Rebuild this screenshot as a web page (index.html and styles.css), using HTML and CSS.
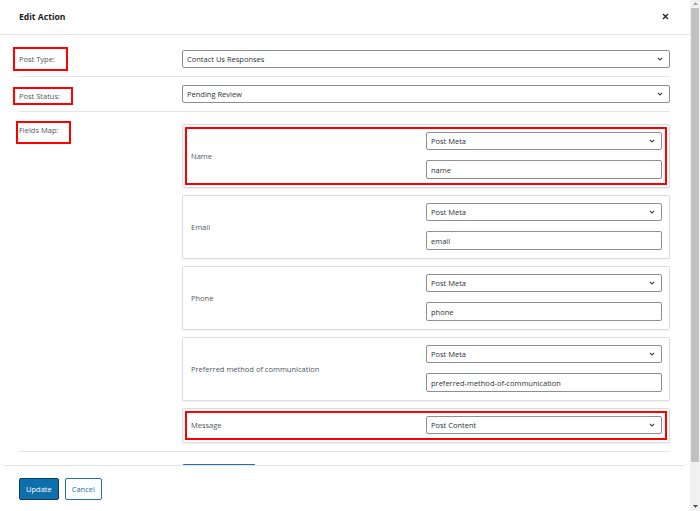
FILE: index.html
```html
<!DOCTYPE html>
<html lang="en">
<head>
<meta charset="utf-8">
<title>Edit Action</title>
<link rel="stylesheet" href="styles.css">
</head>
<body>
<div class="app">
  <div class="modal">
    <header class="head">
      <h1 class="title">Edit Action</h1>
      <span class="close" aria-label="Close">
        <svg width="7" height="7" viewBox="0 0 7 7"><path d="M1 1L6 6M6 1L1 6" stroke="#1d2327" stroke-width="1.3" fill="none"/></svg>
      </span>
    </header>

    <div class="body">
      <div class="row row-center">
        <div class="lab"><span class="mark">Post Type:</span></div>
        <div class="field">
          <div class="select"><span>Contact Us Responses</span><svg class="chev" width="6" height="4" viewBox="0 0 6 4"><path d="M0.8 0.8L3 3L5.2 0.8" stroke="#3c434a" stroke-width="1.1" fill="none"/></svg></div>
        </div>
      </div>

      <div class="row row-center">
        <div class="lab"><span class="mark mark-status">Post Status:</span></div>
        <div class="field">
          <div class="select"><span>Pending Review</span><svg class="chev" width="6" height="4" viewBox="0 0 6 4"><path d="M0.8 0.8L3 3L5.2 0.8" stroke="#3c434a" stroke-width="1.1" fill="none"/></svg></div>
        </div>
      </div>

      <div class="row row-top">
        <div class="lab"><span class="mark mark-map">Fields Map:</span></div>
        <div class="field cards">
          <div class="card marked">
            <div class="card-label">Name</div>
            <div class="card-fields">
              <div class="select"><span>Post Meta</span><svg class="chev" width="6" height="4" viewBox="0 0 6 4"><path d="M0.8 0.8L3 3L5.2 0.8" stroke="#3c434a" stroke-width="1.1" fill="none"/></svg></div>
              <div class="input">name</div>
            </div>
          </div>
          <div class="card">
            <div class="card-label">Email</div>
            <div class="card-fields">
              <div class="select"><span>Post Meta</span><svg class="chev" width="6" height="4" viewBox="0 0 6 4"><path d="M0.8 0.8L3 3L5.2 0.8" stroke="#3c434a" stroke-width="1.1" fill="none"/></svg></div>
              <div class="input">email</div>
            </div>
          </div>
          <div class="card">
            <div class="card-label">Phone</div>
            <div class="card-fields">
              <div class="select"><span>Post Meta</span><svg class="chev" width="6" height="4" viewBox="0 0 6 4"><path d="M0.8 0.8L3 3L5.2 0.8" stroke="#3c434a" stroke-width="1.1" fill="none"/></svg></div>
              <div class="input">phone</div>
            </div>
          </div>
          <div class="card">
            <div class="card-label">Preferred method of communication</div>
            <div class="card-fields">
              <div class="select"><span>Post Meta</span><svg class="chev" width="6" height="4" viewBox="0 0 6 4"><path d="M0.8 0.8L3 3L5.2 0.8" stroke="#3c434a" stroke-width="1.1" fill="none"/></svg></div>
              <div class="input">preferred-method-of-communication</div>
            </div>
          </div>
          <div class="card marked">
            <div class="card-label">Message</div>
            <div class="card-fields">
              <div class="select"><span>Post Content</span><svg class="chev" width="6" height="4" viewBox="0 0 6 4"><path d="M0.8 0.8L3 3L5.2 0.8" stroke="#3c434a" stroke-width="1.1" fill="none"/></svg></div>
            </div>
          </div>
        </div>
      </div>

      <div class="row row-top row-last">
        <div class="lab lab-plain">Default Fields:</div>
        <div class="field">
          <span class="ghost-btn"></span>
        </div>
      </div>
    </div>

    <footer class="foot">
      <button class="btn btn-primary">Update</button>
      <button class="btn btn-secondary">Cancel</button>
    </footer>
  </div>

  <div class="scrollbar">
    <svg class="arrow" width="5" height="3" viewBox="0 0 5 3"><path d="M0 3L2.5 0L5 3Z" fill="#a3a3a3"/></svg>
    <div class="thumb"></div>
    <div class="track"></div>
    <svg class="arrow" width="5" height="3" viewBox="0 0 5 3"><path d="M0 0L5 0L2.5 3Z" fill="#505050"/></svg>
  </div>
</div>
</body>
</html>
```

FILE: styles.css
```css
* { box-sizing: border-box; }

html, body {
  margin: 0;
  padding: 0;
  background: #ffffff;
}

body {
  font-family: "Open Sans", "Noto Sans", sans-serif;
  font-size: 7.5px;
  color: #3c434a;
}

.app {
  display: flex;
  width: 700px;
  height: 511px;
  overflow: hidden;
}

.modal {
  flex: 1;
  display: flex;
  flex-direction: column;
  min-width: 0;
}

/* header */
.head {
  height: 35px;
  flex: none;
  display: flex;
  align-items: center;
  justify-content: space-between;
  padding: 0 21px 1px 19px;
  border-bottom: 1px solid #e2e4e7;
}

.title {
  margin: 0;
  font-size: 8.6px;
  font-weight: 700;
  color: #1d2327;
}

.close {
  display: flex;
  width: 7px;
  height: 7px;
}

/* body */
.body {
  flex: 1;
  min-height: 0;
  overflow: hidden;
  padding: 7px 20px 0 19px;
}

.row {
  display: grid;
  grid-template-columns: 163px 1fr;
  padding: 8px 0;
  border-bottom: 1px solid #e2e4e7;
}

.row-center { align-items: center; }
.row-top { align-items: start; }
.row-last { border-bottom: none; padding-top: 11px; }

.lab {
  color: #50575e;
  line-height: 12px;
}

.lab-plain { padding-top: 1px; }

.mark {
  display: inline-block;
  margin: -3px 0 -3px -6px;
  border: 2px solid #ff0000;
  padding: 4px 11px 4px 4px;
  line-height: 12px;
}

.mark-status {
  margin: 2px 0 -2px -6px;
  padding: 1px 11px 1px 4px;
}

.mark-map {
  margin: 1px 0 0 -3px;
  padding: 1px 11px 6px 1px;
}

/* selects & inputs */
.select {
  display: flex;
  align-items: center;
  justify-content: space-between;
  height: 18px;
  padding: 0 6px 0 4px;
  border: 1px solid #8c8f94;
  border-radius: 2px;
  background: #ffffff;
  color: #2c3338;
}

.chev { flex: none; }

.input {
  display: flex;
  align-items: center;
  height: 19px;
  padding: 0 4px;
  border: 1px solid #8c8f94;
  border-radius: 2px;
  background: #ffffff;
  color: #2c3338;
}

/* cards */
.cards {
  display: flex;
  flex-direction: column;
  gap: 7px;
  padding-top: 4px;
}

.card {
  display: grid;
  grid-template-columns: 1fr 1fr;
  align-items: center;
  padding: 7px 7px 8px;
  border: 1px solid #dcdcde;
  border-radius: 2px;
  box-shadow: 0 1px 1px rgba(0, 0, 0, 0.06);
  background: #ffffff;
}

.marked {
  outline: 2px solid #ff0000;
  outline-offset: -5px;
}

.card-label {
  padding-left: 1px;
  color: #50575e;
}

.card-fields {
  display: flex;
  flex-direction: column;
  gap: 10px;
}

.ghost-btn {
  display: block;
  width: 74px;
  height: 20px;
  margin-top: 1px;
  border: 1px solid #2271b1;
  border-radius: 2px;
}

/* footer */
.foot {
  flex: none;
  height: 46px;
  display: flex;
  align-items: flex-start;
  gap: 6px;
  margin: 0 5px 0 3px;
  padding: 12px 0 0 16px;
  border-top: 1px solid #e2e4e7;
  background: #ffffff;
}

.btn {
  height: 22px;
  margin: 0;
  padding: 0 6px;
  font-family: inherit;
  font-size: 7.5px;
  line-height: normal;
  border-radius: 2px;
  cursor: pointer;
  white-space: nowrap;
}

.btn-primary {
  background: #0f6fab;
  border: 1px solid #0a3d5e;
  color: #ffffff;
}

.btn-secondary {
  background: #ffffff;
  border: 1px solid #2271b1;
  color: #2271b1;
}

/* scrollbar */
.scrollbar {
  flex: none;
  width: 10px;
  display: flex;
  flex-direction: column;
  align-items: center;
  background: #f1f1f1;
  padding: 2px 0 3px;
}

.arrow { flex: none; }

.thumb {
  width: 8px;
  height: 454px;
  margin-top: 3px;
  background: #c1c1c1;
}

.track { flex: 1; }
```
